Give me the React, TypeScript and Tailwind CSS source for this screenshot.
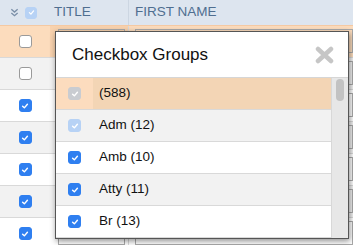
import React from 'react';

type BoxState = 'checked' | 'unchecked' | 'disabled' | 'faded';

function Check({ state, size = 13 }: { state: BoxState; size?: number }) {
  const bg: Record<BoxState, string> = {
    checked: 'bg-[#2f7ff0] border-[#2f7ff0]',
    unchecked: 'bg-white border-[#9a9a9a]',
    disabled: 'bg-[#c9ccd1] border-[#c9ccd1]',
    faded: 'bg-[#b7d2f5] border-[#b7d2f5]',
  };
  return (
    <div
      className={`flex items-center justify-center rounded-[3px] border ${bg[state]}`}
      style={{ width: size, height: size }}
    >
      {state !== 'unchecked' && (
        <svg width={size - 5} height={size - 5} viewBox="0 0 10 10" fill="none">
          <path d="M2 5.2 L4.2 7.3 L8 2.8" stroke="white" strokeWidth="1.8" strokeLinecap="round" strokeLinejoin="round" />
        </svg>
      )}
    </div>
  );
}

const gridRows: { bg: string; cell: string; state: BoxState }[] = [
  { bg: 'bg-[#fcdcbd]', cell: 'bg-[#f8d2ae]', state: 'unchecked' },
  { bg: 'bg-[#f2f2f2]', cell: '', state: 'unchecked' },
  { bg: 'bg-white', cell: '', state: 'checked' },
  { bg: 'bg-[#f2f2f2]', cell: '', state: 'checked' },
  { bg: 'bg-white', cell: '', state: 'checked' },
  { bg: 'bg-[#f2f2f2]', cell: '', state: 'checked' },
  { bg: 'bg-white', cell: '', state: 'checked' },
];

const groups: { label: string; state: BoxState; bg: string; cell: string }[] = [
  { label: '(588)', state: 'disabled', bg: 'bg-[#f3d5b5]', cell: 'bg-[#fcdcbe]' },
  { label: 'Adm (12)', state: 'faded', bg: 'bg-[#f2f2f2]', cell: '' },
  { label: 'Amb (10)', state: 'checked', bg: 'bg-white', cell: '' },
  { label: 'Atty (11)', state: 'checked', bg: 'bg-[#f2f2f2]', cell: '' },
  { label: 'Br (13)', state: 'checked', bg: 'bg-white', cell: '' },
];

export default function App() {
  return (
    <div
      className="relative w-[353px] h-[245px] overflow-hidden bg-white"
      style={{ fontFamily: '"Liberation Sans", Arial, sans-serif' }}
    >
      {/* grid header */}
      <div className="flex h-[26px] bg-[#dde5ef] border-b border-[#f4c9a3] text-[13.5px] text-[#4f6e90]">
        <div className="w-[50px] flex items-center pl-[10px] gap-[6px]">
          <svg width="9" height="9" viewBox="0 0 10 10" fill="none">
            <path d="M1.5 1.5 L5 4.5 L8.5 1.5 M1.5 5.5 L5 8.5 L8.5 5.5" stroke="#7b8fa8" strokeWidth="1.5" />
          </svg>
          <Check state="faded" size={12} />
        </div>
        <div className="w-[79px] flex items-center pl-[4px] border-r border-[#ccd6e2]">TITLE</div>
        <div className="flex-1 flex items-center pl-[6px]">FIRST NAME</div>
      </div>

      {/* grid rows */}
      {gridRows.map((r, i) => (
        <div key={i} className={`flex h-[32px] border-b border-[#d9d9d9] ${r.bg}`}>
          <div className="w-[50px] flex items-center justify-center">
            <Check state={r.state} />
          </div>
          <div className={`w-[79px] pl-[8px] pr-[3px] pt-[3px] border-r border-[#d9d9d9] ${r.cell}`}>
            <div className="h-[24px] border border-[#aaaaaa]" />
          </div>
          <div className="flex-1 pl-[6px] pt-[3px]">
            <div className="h-[24px] border border-[#aaaaaa]" />
          </div>
        </div>
      ))}

      {/* dialog */}
      <div className="absolute left-[55px] top-[31px] w-[294px] h-[208px] bg-white border border-[#555555] shadow-[1px_2px_6px_rgba(0,0,0,0.45)] flex flex-col">
        <div className="h-[46px] shrink-0 flex items-center justify-between border-b border-[#d6d6d6] pl-[16px] pr-[14px]">
          <span className="text-[17px] text-[#111111]">Checkbox Groups</span>
          <svg width="19" height="18" viewBox="0 0 19 18" fill="none">
            <path d="M3 3 L16 15 M16 3 L3 15" stroke="#c6c6c6" strokeWidth="4.5" strokeLinecap="round" />
          </svg>
        </div>
        <div className="flex flex-1">
          <div className="flex-1 flex flex-col">
            {groups.map((g) => (
              <div key={g.label} className={`flex h-[32px] border-b border-[#d9d9d9] ${g.bg}`}>
                <div className={`w-[37px] flex items-center justify-center ${g.cell}`}>
                  <Check state={g.state} />
                </div>
                <div className="flex items-center pl-[6px] text-[13.5px] text-[#111111]">{g.label}</div>
              </div>
            ))}
          </div>
          <div className="w-[17px] bg-[#e7e7e7] border-l border-[#d8d8d8] pt-[1px] flex justify-center">
            <div className="w-[8px] h-[22px] rounded-full bg-[#c2c2c2]" />
          </div>
        </div>
      </div>
    </div>
  );
}
